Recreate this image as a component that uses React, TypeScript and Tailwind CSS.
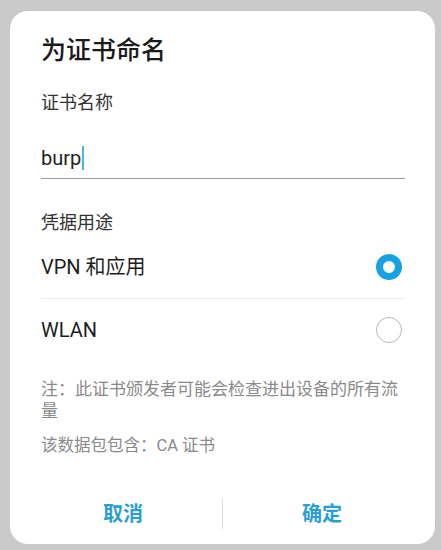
import { useState } from 'react'

const font = { fontFamily: 'Roboto, "Noto Sans CJK SC", sans-serif' }

interface OptionRowProps {
  label: string
  selected: boolean
  onSelect: () => void
}

function OptionRow({ label, selected, onSelect }: OptionRowProps) {
  return (
    <button
      type="button"
      onClick={onSelect}
      className="flex h-[62px] w-full items-center justify-between text-left"
    >
      <span className="text-[20px] leading-[28px] text-[#1e1e1e]">{label}</span>
      {selected ? (
        <span className="mr-[3px] box-border h-[26px] w-[26px] rounded-full border-[7px] border-[#18a2e6]" />
      ) : (
        <span className="mr-[3px] box-border h-[26px] w-[26px] rounded-full border-[1.5px] border-[#b8b8b8]" />
      )}
    </button>
  )
}

export default function App() {
  const [usage, setUsage] = useState<'vpn' | 'wlan'>('vpn')

  return (
    <div className="h-[550px] w-[441px] bg-[#cacaca] pl-[10px] pr-[6px] pt-[11px]" style={font}>
      <div className="flex h-[533px] flex-col rounded-[18px] bg-white pl-[31px] pr-[30px] pt-[24px]">
        {/* Title */}
        <h1 className="text-[25px] font-medium leading-[32px] text-[#1a1a1a]">为证书命名</h1>

        {/* Name field */}
        <p className="mt-[23px] text-[18px] leading-[26px] text-[#333]">证书名称</p>
        <div className="mt-[28px] flex items-center border-b-[1.5px] border-[#9a9a9a] pb-[6px]">
          <span className="text-[20px] leading-[28px] text-[#222]">burp</span>
          <span className="ml-[1px] inline-block h-[24px] w-[2px] bg-[#4cb8d8]" />
        </div>

        {/* Usage */}
        <p className="mt-[31px] text-[18px] leading-[26px] text-[#333]">凭据用途</p>
        <OptionRow label="VPN 和应用" selected={usage === 'vpn'} onSelect={() => setUsage('vpn')} />
        <div className="h-px bg-[#ececec]" />
        <OptionRow label="WLAN" selected={usage === 'wlan'} onSelect={() => setUsage('wlan')} />

        {/* Notes */}
        <p className="mt-[17px] max-w-[358px] text-[17px] leading-[22px] text-[#8a8a8a]">
          注：此证书颁发者可能会检查进出设备的所有流量
        </p>
        <p className="mt-[13px] text-[16.5px] leading-[22px] text-[#8a8a8a]">该数据包包含：CA 证书</p>

        {/* Actions */}
        <div className="-ml-[17px] -mr-[16px] mt-[33px] flex h-[48px] items-center">
          <button type="button" className="flex-1 text-[20px] font-bold text-[#2a9fd4]">
            取消
          </button>
          <div className="h-[30px] w-px bg-[#dcdcdc]" />
          <button type="button" className="flex-1 text-[20px] font-bold text-[#2a9fd4]">
            确定
          </button>
        </div>
      </div>
    </div>
  )
}
